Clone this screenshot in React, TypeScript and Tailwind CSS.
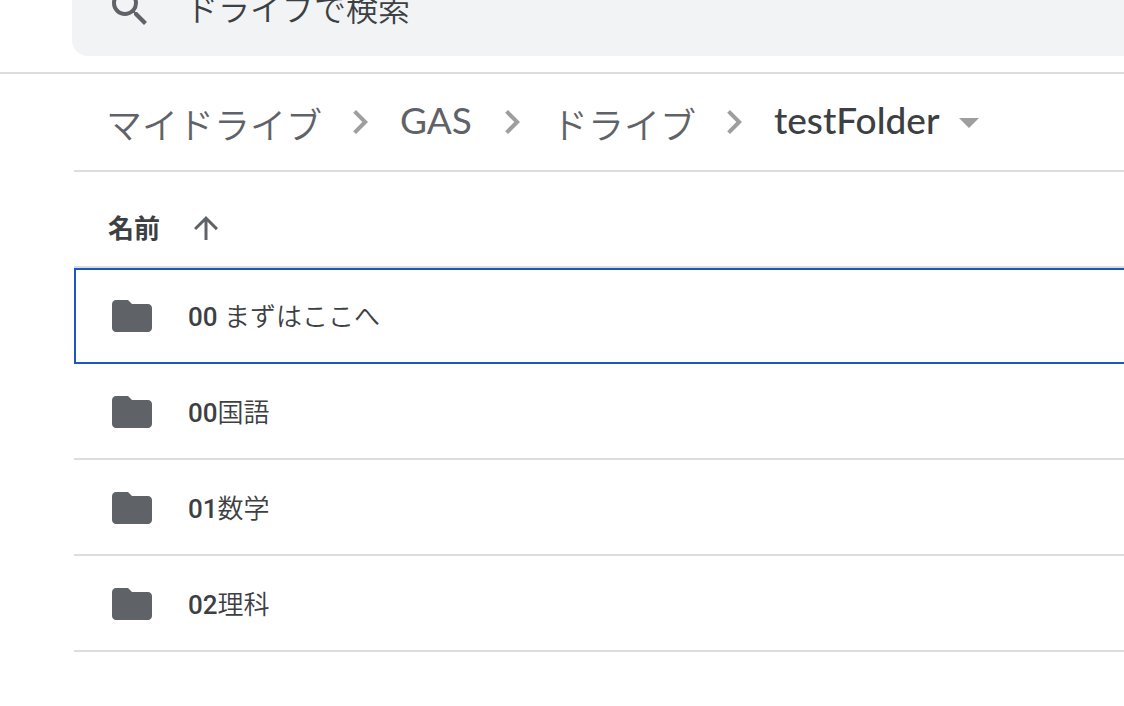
import { MdArrowDropDown, MdArrowUpward, MdChevronRight, MdFolder, MdSearch } from "react-icons/md";
import { clsx } from "clsx";

const parents = [
    { name: "マイドライブ", kana: true },
    { name: "GAS", kana: false },
    { name: "ドライブ", kana: true },
];

const folders = [
    { prefix: "00 ", label: "まずはここへ", selected: true },
    { prefix: "00", label: "国語", selected: false },
    { prefix: "01", label: "数学", selected: false },
    { prefix: "02", label: "理科", selected: false },
];

function SearchBar() {
    return (
        <header className="border-b-2 border-[#dadce0] pb-4 pl-[72px] overflow-hidden">
            <div className="-mt-10 h-24 flex items-center gap-8 rounded-bl-2xl bg-[#f1f3f4] pl-[34px]">
                <button aria-label="検索" className="shrink-0">
                    <MdSearch size={48} className="text-[#5f6368]" />
                </button>
                <input
                    type="text"
                    aria-label="ドライブで検索"
                    placeholder="ドライブで検索"
                    className="h-full min-w-0 flex-1 bg-transparent pb-0.5 text-[32px] font-[350] text-[#3c4043] placeholder:text-[#3c4043] outline-none font-['Noto_Sans_CJK_JP',sans-serif]"
                />
            </div>
        </header>
    );
}

function Breadcrumbs() {
    return (
        <nav className="flex h-[98px] items-center border-b-2 border-[#dadce0] pl-4 font-[Lato,'Noto_Sans_CJK_JP',sans-serif] whitespace-nowrap">
            {parents.map(({ name, kana }) => (
                <div key={name} className="flex items-center">
                    <a href="#" className={clsx("pl-4 text-[#5f6368]", kana ? "pt-1.5 pr-3.5 text-[36px] font-[350]" : "pb-1 pr-4 text-[37px] font-normal")}>{name}</a>
                    <MdChevronRight size={48} className="shrink-0 text-[#9e9e9e]" />
                </div>
            ))}
            <button className="flex items-center gap-1.5 pl-4 text-[37px] font-medium text-[#3c4043]">
                <span className="pb-1">testFolder</span>
                <MdArrowDropDown size={48} className="shrink-0 text-[#9e9e9e]" />
            </button>
        </nav>
    );
}

export default function App() {
    return (
        <div className="min-h-screen bg-white text-[#3c4043]">
            <SearchBar />
            <main className="pl-[74px]">
                <Breadcrumbs />
                <table className="w-full border-separate border-spacing-0 font-[Roboto,'Noto_Sans_CJK_JP',sans-serif] text-[26px]">
                    <thead>
                        <tr>
                            <th className="p-0 text-left">
                                <div className="flex h-24 items-center gap-7 border-b-2 border-[#dadce0] pl-[34px] pt-[18px]">
                                    <span className="pt-0.5 font-bold">名前</span>
                                    <button aria-label="並べ替え">
                                        <MdArrowUpward size={36} className="text-[#5f6368]" />
                                    </button>
                                </div>
                            </th>
                        </tr>
                    </thead>
                    <tbody>
                        {folders.map(({ prefix, label, selected }) => (
                            <tr key={prefix + label}>
                                <td
                                    className={clsx(
                                        "h-24 p-0",
                                        selected ? "border-y-2 border-l-2 border-[#185abc] pl-8" : "border-b-2 border-[#dadce0] pl-[34px] pt-0.5"
                                    )}
                                >
                                    <div className="flex items-center gap-8">
                                        <MdFolder size={48} className="shrink-0 text-[#5f6368]" />
                                        <span className="whitespace-pre pt-0.5 font-[350]">
                                            <span className="font-medium">{prefix}</span>
                                            {label}
                                        </span>
                                    </div>
                                </td>
                            </tr>
                        ))}
                    </tbody>
                </table>
            </main>
        </div>
    );
}
